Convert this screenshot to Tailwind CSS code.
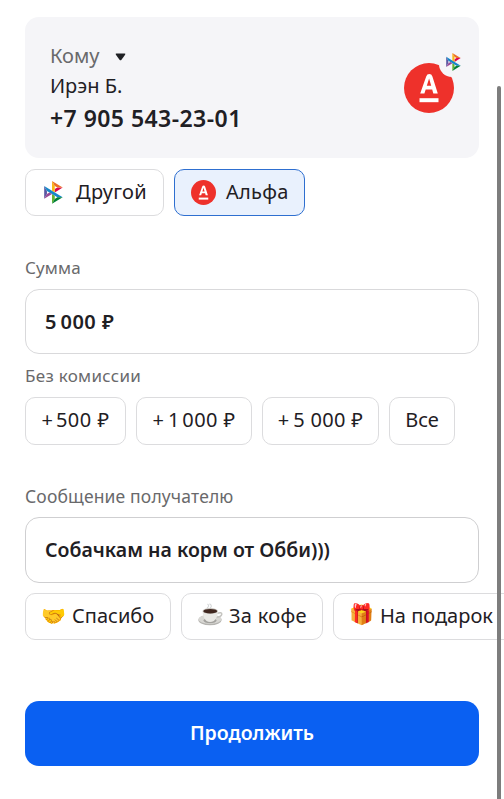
<!DOCTYPE html>
<html lang="ru">
<head>
<meta charset="utf-8">
<title>Перевод</title>
<script src="https://cdn.jsdelivr.net/npm/@tailwindcss/browser@4"></script>
</head>
<body class="relative h-[799px] w-[504px] overflow-hidden bg-white font-['Noto_Sans','Open_Sans',sans-serif] text-[20px] leading-[28px] text-[#1f2024]">
<svg class="hidden">
  <symbol id="sbp" viewBox="0 0 98 121">
    <path fill="#5B57A2" d="M0 26l14.500 26v16L0 94z"/>
    <path fill="#D90751" d="M55.800 42.700l13.600-8.400h27.900L55.800 60z"/>
    <path fill="#FAB718" d="M55.700 26l.1 34.400-14.600-9V0z"/>
    <path fill="#ED6F26" d="M97.300 34.300H69.400L55.700 26 41.200 0z"/>
    <path fill="#63B22F" d="M55.800 94.200V77.600l-14.600-8.800v51.400z"/>
    <path fill="#1487C9" d="M69.400 85.900L14.500 52.100 0 26l97.200 59.900z"/>
    <path fill="#017F36" d="M41.200 120.200l14.500-26 13.700-8.300h27.900z"/>
    <path fill="#984995" d="M0 94l41.300-25.200-13.900-8.500-13 7.900z"/>
  </symbol>
  <symbol id="alfa" viewBox="0 0 50 50">
    <circle cx="25" cy="25" r="25" fill="#ee312b"/>
    <path fill="#fff" fill-rule="evenodd" d="M16.200 30.500L22.200 13.400Q23 11 25.300 11Q27.600 11 28.400 13.400L33.800 30.500H29.300L28.200 26.500H21.700L20.400 30.500ZM22.800 22.800H27.200L25.100 15.600Z"/>
    <rect x="15.500" y="35.200" width="19" height="4" fill="#fff"/>
  </symbol>
</svg>

<main class="pl-[25px] pt-[17px]">
  <section class="flex h-[141px] w-[454px] justify-between rounded-[14px] bg-[#f5f5f8] pl-[25px] pr-[16px]">
    <div class="pt-[24px]">
      <div class="flex h-[29px] items-center text-[#69696b]">
        <span>Кому</span>
        <svg class="ml-[15px] mt-[2px] h-[8px] w-[11px]" viewBox="0 0 11 8"><path fill="#1f2024" d="M1.500.5h8q1.500 0 .6 1.300L6.500 6.700q-1 1.200-2 0L.9 1.800Q0 .5 1.500.5z"/></svg>
      </div>
      <div class="h-[31px] leading-[31px]">Ирэн Б.</div>
      <div class="text-[23px] font-semibold leading-[34px] tracking-[0.45px]">+7 905 543-23-01</div>
    </div>
    <div class="relative mt-[35px] h-[64px] w-[60px]">
      <svg class="absolute left-[1px] top-[11px] size-[50px]"><use href="#alfa"/></svg>
      <span class="absolute left-[36px] top-[-1px] size-[26px] rounded-full bg-[#f5f5f8]"></span>
      <svg class="absolute left-[43px] top-[1px] h-[18px] w-[15px]"><use href="#sbp"/></svg>
    </div>
  </section>

  <div class="mt-[11px] flex gap-[10px]">
    <button class="flex h-[47px] w-[139px] items-center rounded-[10px] border border-[#dcdcde] pb-px pl-[18px] tracking-[0.3px]">
      <svg class="mr-[13px] mt-px h-[23px] w-[19px]"><use href="#sbp"/></svg>Другой
    </button>
    <button class="flex h-[47px] w-[131px] items-center rounded-[10px] border-[1.500px] border-[#2e6fd0] bg-[#e9f1fd] pb-px pl-[16px] tracking-[0.25px]">
      <svg class="mr-[10px] mt-px size-[25px]"><use href="#alfa"/></svg>Альфа
    </button>
  </div>

  <div class="mt-[39px] h-[26px] text-[17px] leading-[26px] tracking-[0.150px] text-[#69696b]">Сумма</div>
  <div class="mt-[8px] flex h-[65px] w-[454px] items-center rounded-[14px] border border-[#d9d9db] pl-[19px] font-semibold">5<span class="ml-[4px] tracking-[0.500px]">000 ₽</span></div>
  <div class="mt-[9px] h-[26px] text-[17px] leading-[26px] tracking-[0.3px] text-[#69696b]">Без комиссии</div>
  <div class="mt-[8px] flex gap-[10px]">
    <button class="h-[48px] w-[101px] rounded-[10px] border border-[#dcdcde] pb-[2px]">+<span class="ml-[3px] tracking-[0.5px]">500 ₽</span></button>
    <button class="h-[48px] w-[116px] rounded-[10px] border border-[#dcdcde] pb-[2px]">+<span class="ml-[4px]">1</span><span class="ml-[3px] tracking-[0.4px]">000 ₽</span></button>
    <button class="h-[48px] w-[117px] rounded-[10px] border border-[#dcdcde] pb-[2px]">+<span class="ml-[4px] tracking-[0.3px]">5 000 ₽</span></button>
    <button class="h-[48px] w-[66px] rounded-[10px] border border-[#dcdcde] pb-[2px]">Все</button>
  </div>

  <div class="mt-[38px] h-[26px] text-[17.500px] leading-[26px] tracking-[0.150px] text-[#69696b]">Сообщение получателю</div>
  <div class="mt-[8px] flex h-[66px] w-[454px] items-center rounded-[14px] border-[1.500px] border-[#cfcfd1] pl-[19px] text-[19.500px] font-semibold">Собачкам на корм от Обби)))</div>
  <div class="mt-[10px] flex w-[479px] gap-[10px] overflow-hidden">
    <button class="flex h-[47px] w-[146px] shrink-0 items-center rounded-[10px] border border-[#dcdcde] pb-px pl-[15px]"><span class="w-[31px] text-left text-[20px]">🤝</span>Спасибо</button>
    <button class="flex h-[47px] w-[142px] shrink-0 items-center rounded-[10px] border border-[#dcdcde] pb-px pl-[16px] tracking-[0.3px]">
      <svg class="mb-[3px] mr-[6px] h-[23px] w-[25px]" viewBox="0 0 25 23">
        <path d="M9 5Q12 3 9.500 1M12 5Q15 3 11.500.8" fill="none" stroke="#d5d7d8" stroke-width="1.100"/>
        <ellipse cx="12" cy="17" rx="11.700" ry="5.300" fill="#b5b4b0"/>
        <ellipse cx="12" cy="16.300" rx="11.500" ry="4.700" fill="#d8d7d3"/>
        <ellipse cx="12" cy="17.600" rx="6.500" ry="2.600" fill="#a3a29e"/>
        <path d="M19 10.300Q24 8.700 23.800 11.200Q23.500 14 18 14.600" fill="none" stroke="#c5c4c0" stroke-width="1.500"/>
        <path d="M4.500 8Q5 15.500 8.500 18Q12 19.800 15.800 18Q19.500 15.500 20 8z" fill="#eae9e5"/>
        <ellipse cx="12.250" cy="8" rx="7.750" ry="2.900" fill="#c9c6c0"/>
        <ellipse cx="12.250" cy="8.200" rx="6.900" ry="2.300" fill="#40271f"/>
      </svg>За кофе</button>
    <button class="flex h-[47px] w-[190px] shrink-0 items-center rounded-[10px] border border-[#dcdcde] pb-px pl-[15px]"><span class="mb-[4px] w-[31px] text-left text-[20px]">🎁</span>На подарок</button>
  </div>

  <button class="mt-[61px] block h-[65px] w-[454px] rounded-[14px] bg-[#0a60f2] pb-px text-[19.500px] font-semibold text-white">Продолжить</button>
</main>
<div class="absolute left-[497px] top-[86px] h-[713px] w-[3.500px] rounded-t-full bg-[#7d7d7d]"></div>
</body>
</html>
